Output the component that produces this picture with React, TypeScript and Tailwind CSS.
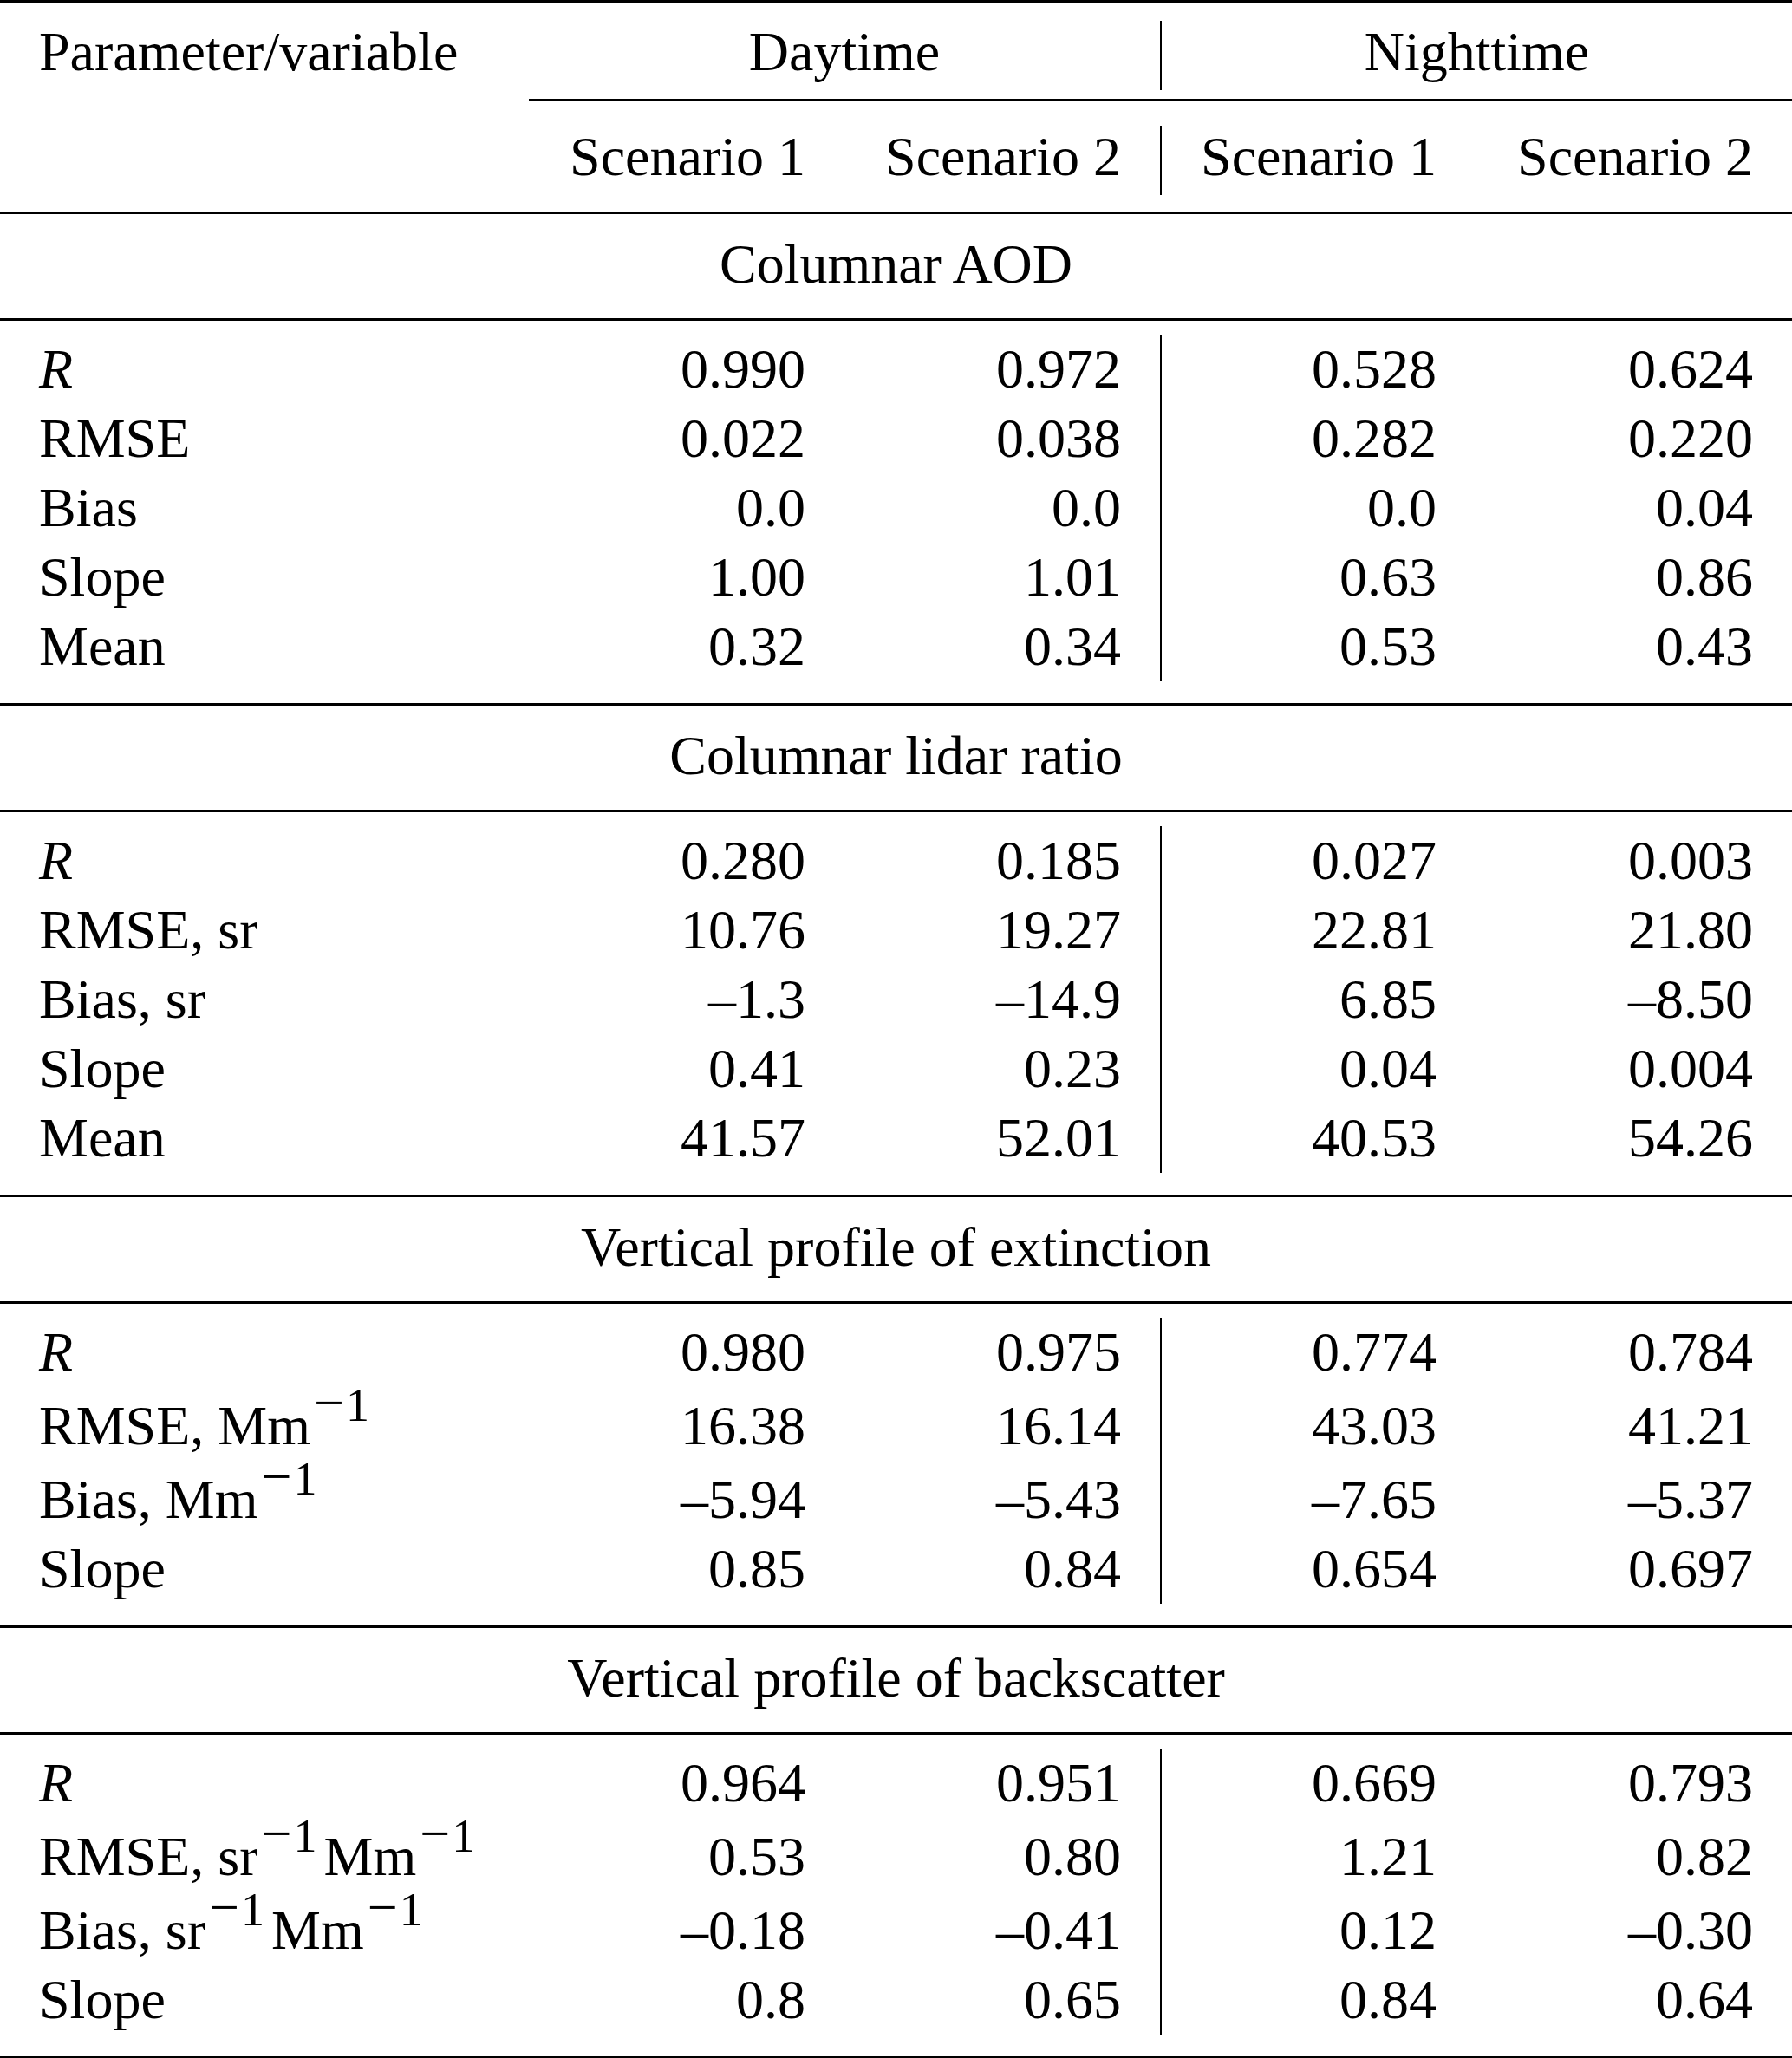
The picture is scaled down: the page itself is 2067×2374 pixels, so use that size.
import type { ReactNode } from "react";

const grid = "grid grid-cols-[610px_364px_364px_364px_365px]";

interface Row {
  label: ReactNode;
  values: string[];
  tall?: boolean;
}

const Rule = () => <div className="h-[3px] bg-black" />;

// exponent "−1" after a unit (math minus is wider than the text one)
const Inv = () => (
  <sup className="text-[54px] ml-[4px]">
    <span className="text-[62px] mr-[2px]">−</span>1
  </sup>
);

const DataRow = ({ label, values, tall }: Row) => {
  const h = tall ? "h-[85px]" : "h-[80px]";
  const pad = tall ? "pt-[5px]" : "";
  return (
    <div className={`${grid} ${h}`}>
      <div className={`flex items-center pl-[45px] whitespace-nowrap ${pad}`}>{label}</div>
      {values.map((v, i) => (
        <div
          key={i}
          className={`flex items-center justify-end pr-[45px] ${pad} ${i === 2 ? "border-l-2 border-black" : ""}`}
        >
          {v}
        </div>
      ))}
    </div>
  );
};

const Section = ({ title, rows }: { title: string; rows: Row[] }) => (
  <>
    <div className="h-[120px] pb-[5px] flex items-center justify-center">{title}</div>
    <Rule />
    <div className="pt-[16px] pb-[25px]">
      {rows.map((r, i) => (
        <DataRow key={i} {...r} />
      ))}
    </div>
    <Rule />
  </>
);

const R = <span className="italic">R</span>;

const sections: { title: string; rows: Row[] }[] = [
  {
    title: "Columnar AOD",
    rows: [
      { label: R, values: ["0.990", "0.972", "0.528", "0.624"] },
      { label: "RMSE", values: ["0.022", "0.038", "0.282", "0.220"] },
      { label: "Bias", values: ["0.0", "0.0", "0.0", "0.04"] },
      { label: "Slope", values: ["1.00", "1.01", "0.63", "0.86"] },
      { label: "Mean", values: ["0.32", "0.34", "0.53", "0.43"] },
    ],
  },
  {
    title: "Columnar lidar ratio",
    rows: [
      { label: R, values: ["0.280", "0.185", "0.027", "0.003"] },
      { label: "RMSE, sr", values: ["10.76", "19.27", "22.81", "21.80"] },
      { label: "Bias, sr", values: ["–1.3", "–14.9", "6.85", "–8.50"] },
      { label: "Slope", values: ["0.41", "0.23", "0.04", "0.004"] },
      { label: "Mean", values: ["41.57", "52.01", "40.53", "54.26"] },
    ],
  },
  {
    title: "Vertical profile of extinction",
    rows: [
      { label: R, values: ["0.980", "0.975", "0.774", "0.784"] },
      {
        label: (
          <span>
            RMSE, Mm<Inv />
          </span>
        ),
        values: ["16.38", "16.14", "43.03", "41.21"],
        tall: true,
      },
      {
        label: (
          <span>
            Bias, Mm<Inv />
          </span>
        ),
        values: ["–5.94", "–5.43", "–7.65", "–5.37"],
        tall: true,
      },
      { label: "Slope", values: ["0.85", "0.84", "0.654", "0.697"] },
    ],
  },
  {
    title: "Vertical profile of backscatter",
    rows: [
      { label: R, values: ["0.964", "0.951", "0.669", "0.793"] },
      {
        label: (
          <span>
            RMSE, sr<Inv />
            <span className="ml-[8px]">Mm</span>
            <Inv />
          </span>
        ),
        values: ["0.53", "0.80", "1.21", "0.82"],
        tall: true,
      },
      {
        label: (
          <span>
            Bias, sr<Inv />
            <span className="ml-[8px]">Mm</span>
            <Inv />
          </span>
        ),
        values: ["–0.18", "–0.41", "0.12", "–0.30"],
        tall: true,
      },
      { label: "Slope", values: ["0.8", "0.65", "0.84", "0.64"] },
    ],
  },
];

export default function App() {
  return (
    <div className="w-[2067px] min-h-[2374px] bg-white text-black font-['Liberation_Serif',serif] text-[64px] leading-[70px]">
      <Rule />
      {/* header: day / night spans */}
      <div className="pt-[21px] pb-[10px]">
        <div className={`${grid} h-[80px]`}>
          <div className="flex items-center pl-[45px] pb-[8px]">Parameter/variable</div>
          <div className="col-span-2 flex items-center justify-center pb-[8px]">Daytime</div>
          <div className="col-span-2 flex items-center justify-center pb-[8px] border-l-2 border-black">
            Nighttime
          </div>
        </div>
      </div>
      <div className="ml-[610px] h-[3px] bg-black" />
      <div className="pt-[28px] pb-[19px]">
        <div className={`${grid} h-[80px]`}>
          <div />
          <div className="flex items-center justify-end pr-[45px] pb-[8px]">Scenario 1</div>
          <div className="flex items-center justify-end pr-[45px] pb-[8px]">Scenario 2</div>
          <div className="flex items-center justify-end pr-[45px] pb-[8px] border-l-2 border-black">
            Scenario 1
          </div>
          <div className="flex items-center justify-end pr-[45px] pb-[8px]">Scenario 2</div>
        </div>
      </div>
      <Rule />
      {sections.map((s) => (
        <Section key={s.title} title={s.title} rows={s.rows} />
      ))}
    </div>
  );
}
